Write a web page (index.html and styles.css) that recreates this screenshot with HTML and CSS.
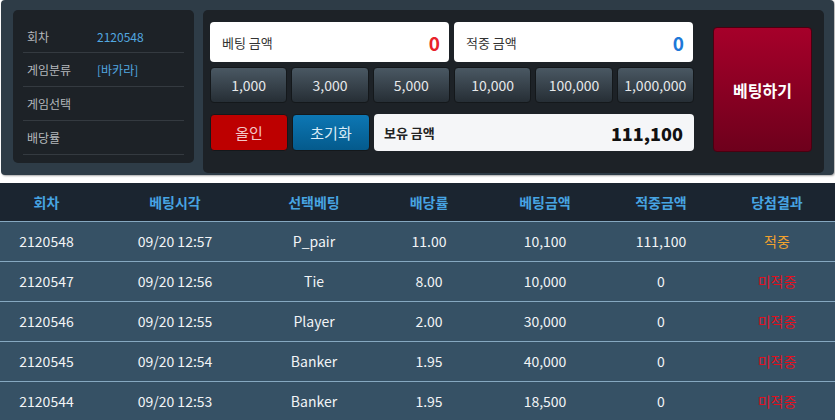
FILE: index.html
```html
<!DOCTYPE html>
<html>
<head>
	<meta charset="utf-8">
	<title>바카라 베팅</title>
	<link rel="stylesheet" href="styles.css">
</head>
<body>
<div class="betPanel">
	<div class="info">
		<div class="infoRow"><span class="infoKey">회차</span><span class="infoVal">2120548</span></div>
		<div class="infoRow"><span class="infoKey">게임분류</span><span class="infoVal">[바카라]</span></div>
		<div class="infoRow"><span class="infoKey">게임선택</span><span class="infoVal"></span></div>
		<div class="infoRow"><span class="infoKey">배당률</span><span class="infoVal"></span></div>
	</div>
	<div class="betBox">
		<div class="betForm">
			<div class="amounts">
				<div class="amount"><span>베팅 금액</span><strong class="red">0</strong></div>
				<div class="amount"><span>적중 금액</span><strong class="blue">0</strong></div>
			</div>
			<div class="chips">
				<button class="chip">1,000</button>
				<button class="chip">3,000</button>
				<button class="chip">5,000</button>
				<button class="chip">10,000</button>
				<button class="chip">100,000</button>
				<button class="chip">1,000,000</button>
			</div>
			<div class="actions">
				<button class="btnAll">올인</button>
				<button class="btnReset">초기화</button>
				<div class="balance"><span>보유 금액</span><strong>111,100</strong></div>
			</div>
		</div>
		<button class="btnBet">베팅하기</button>
	</div>
</div>

<table class="history">
	<colgroup>
		<col class="c1"><col class="c2"><col class="c3"><col class="c4"><col class="c4"><col class="c4"><col class="c4">
	</colgroup>
	<thead>
		<tr><th>회차</th><th>베팅시각</th><th>선택베팅</th><th>배당률</th><th>베팅금액</th><th>적중금액</th><th>당첨결과</th></tr>
	</thead>
	<tbody>
		<tr><td>2120548</td><td>09/20 12:57</td><td>P_pair</td><td>11.00</td><td>10,100</td><td>111,100</td><td class="win">적중</td></tr>
		<tr><td>2120547</td><td>09/20 12:56</td><td>Tie</td><td>8.00</td><td>10,000</td><td>0</td><td class="lose">미적중</td></tr>
		<tr><td>2120546</td><td>09/20 12:55</td><td>Player</td><td>2.00</td><td>30,000</td><td>0</td><td class="lose">미적중</td></tr>
		<tr><td>2120545</td><td>09/20 12:54</td><td>Banker</td><td>1.95</td><td>40,000</td><td>0</td><td class="lose">미적중</td></tr>
		<tr><td>2120544</td><td>09/20 12:53</td><td>Banker</td><td>1.95</td><td>18,500</td><td>0</td><td class="lose">미적중</td></tr>
	</tbody>
</table>
</body>
</html>
```

FILE: styles.css
```css
*{box-sizing:border-box;}
body{margin:0;background:#fff;font-family:"Noto Sans CJK KR","Noto Sans",sans-serif;color:#333;}
button{font-family:inherit;cursor:pointer;}

/* 상단 베팅 패널 */
.betPanel{display:flex;align-items:flex-start;gap:9px;width:833px;height:175px;margin-left:1px;padding:10px 10px 0 12px;background:#2e3c47;border-radius:4px;box-shadow:1px 1px 2px rgba(0,0,0,.35);}
.info{width:181px;height:153px;padding:10px 10px 0;background:#1d2227;border-radius:5px;}
.infoRow{display:flex;align-items:center;height:34px;padding-left:4px;border-bottom:1px solid #343a40;font-size:12px;}
.infoRow:first-child{height:33px;}
.infoKey{width:70px;color:#b4b8bc;}
.infoVal{color:#52a8e0;}

.betBox{display:flex;width:621px;height:163px;padding:12px 12px 0 7px;background:#1d2227;border-radius:5px;}
.betForm{width:484px;}
.amounts{display:flex;gap:5px;}
.amount{display:flex;align-items:center;justify-content:space-between;width:239px;height:40px;padding:0 9px 0 12px;background:#fff;border-radius:4px;font-size:13px;color:#333;}
.amount strong{font-size:19px;font-weight:700;}
.red{color:#e8222a;}
.blue{color:#1d78d8;}

.chips{display:flex;gap:4px;margin-top:5px;}
.chip{flex:1;height:36px;border:1px solid #14181b;border-radius:4px;background:linear-gradient(#4a5863,#262e35);color:#e6e8ea;font-size:14px;padding:0;}

.actions{display:flex;gap:4px;margin-top:11px;}
.btnAll,.btnReset{width:78px;height:37px;border:1px solid #14181b;border-radius:4px;font-size:15px;padding:0;}
.btnAll{background:#bd0000;color:#f3c8c8;}
.btnReset{background:linear-gradient(#0d77b4,#045a8c);color:#d9ecf8;}
.balance{display:flex;align-items:center;justify-content:space-between;flex:1;height:37px;padding:0 11px 0 10px;background:#f5f6f8;border-radius:4px;font-size:13px;font-weight:700;color:#222;}
.balance strong{font-size:18px;color:#111;}

.btnBet{width:99px;height:125px;margin:5px 0 0 19px;border:1px solid #4a0010;border-radius:4px;background:linear-gradient(#a6002a,#6e001c);color:#fff;font-size:16px;font-weight:700;padding:0;}

/* 베팅 내역 */
.history{width:835px;margin-top:8px;border-collapse:collapse;table-layout:fixed;font-size:14px;text-align:center;}
.history .c1{width:93px;}
.history .c2{width:164px;}
.history .c3{width:114px;}
.history .c4{width:116px;}
.history th{height:38px;background:#1b2530;color:#47a4e2;font-weight:700;font-size:14px;}
.history td{height:40px;background:#365165;color:#f2f4f6;border-top:1px solid #86a8c0;}
.history td.win{color:#f2a12e;}
.history td.lose{color:#e3101e;}
```
